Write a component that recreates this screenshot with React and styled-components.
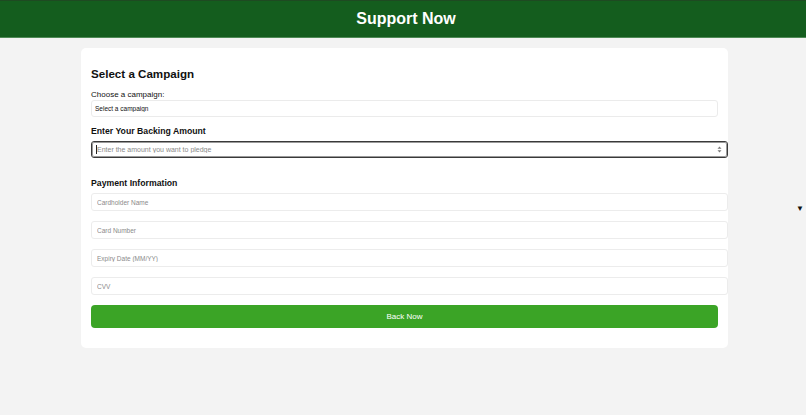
import React from "react";
import styled, { createGlobalStyle } from "styled-components";

const Global = createGlobalStyle`
  html, body { margin: 0; padding: 0; }
  body {
    background: #f3f3f3;
    font-family: "Liberation Sans", Arial, sans-serif;
    color: #111;
  }
  * { box-sizing: border-box; }
`;

const Page = styled.div`
  position: relative;
  min-height: 415px;
`;

const Header = styled.header`
  height: 38px;
  background: #145d1e;
  border-top: 1px solid #1e4a22;
  border-bottom: 1px solid #4f8a56;
  display: flex;
  align-items: center;
  justify-content: center;
`;

const Title = styled.h1`
  margin: 0 0 0 6px;
  color: #fff;
  font-size: 16px;
  font-weight: bold;
  line-height: 20px;
`;

const Card = styled.main`
  width: 647px;
  margin: 10px 0 0 81px;
  background: #fff;
  border-radius: 5px;
  padding: 10px 10px 20px;
  display: flex;
  flex-direction: column;
`;

const H2 = styled.h2`
  margin: 9px 0 0;
  font-size: 11.6px;
  line-height: 14px;
  font-weight: bold;
`;

const Label = styled.label`
  margin-top: 9px;
  font-size: 8px;
  line-height: 10px;
`;

const Select = styled.select`
  margin: 0;
  height: 17px;
  width: 100%;
  border: 1px solid #ebebeb;
  border-radius: 3px;
  background: #fff;
  font-family: inherit;
  font-size: 6.5px;
  padding: 0 3px;
  color: #111;
  appearance: none;
  outline: none;
`;

const H3 = styled.h3`
  margin: ${(p) => p.$top}px 0 0;
  font-size: 8.7px;
  line-height: 12px;
  font-weight: bold;
`;

const FieldWrap = styled.div`
  position: relative;
  margin-top: ${(p) => p.$top}px;
  width: calc(100% + 10px);
`;

const Input = styled.input`
  display: block;
  width: 100%;
  height: ${(p) => (p.$focus ? 17 : 18)}px;
  margin: 0;
  padding: 0 5px;
  font-family: inherit;
  font-size: ${(p) => (p.$focus ? 7 : 6.5)}px;
  color: #111;
  background: #fff;
  border: 1px solid ${(p) => (p.$focus ? "#3a3a3a" : "#ececec")};
  border-radius: 3px;
  outline: ${(p) => (p.$focus ? "1px solid #9a9a9a" : "none")};
  outline-offset: -2px;
  &::placeholder { color: #8a8a8a; }
  &::-webkit-inner-spin-button,
  &::-webkit-outer-spin-button { -webkit-appearance: none; margin: 0; }
  -moz-appearance: textfield;
`;

const Caret = styled.span`
  position: absolute;
  left: 5px;
  top: 4px;
  width: 1px;
  height: 9px;
  background: #222;
`;

const Spinner = styled.svg`
  position: absolute;
  right: 6px;
  top: 5px;
`;

const Button = styled.button`
  margin-top: 10px;
  height: 23px;
  width: 100%;
  border: none;
  border-radius: 4px;
  background: #3ba426;
  color: #fff;
  font-family: inherit;
  font-size: 8px;
`;

const Marker = styled.span`
  position: absolute;
  right: 2px;
  top: 204px;
  font-size: 8px;
  line-height: 10px;
  color: #111;
`;

export default function App() {
  return (
    <Page>
      <Global />
      <Header>
        <Title>Support Now</Title>
      </Header>
      <Card>
        <H2>Select a Campaign</H2>
        <Label htmlFor="campaign">Choose a campaign:</Label>
        <Select id="campaign" defaultValue="">
          <option value="">Select a campaign</option>
        </Select>
        <H3 $top={8}>Enter Your Backing Amount</H3>
        <FieldWrap $top={4}>
          <Input $focus type="number" placeholder="Enter the amount you want to pledge" />
          <Caret />
          <Spinner width="5" height="7" viewBox="0 0 5 7">
            <path d="M2.5 0.5 L4.5 2.8 L0.5 2.8 Z" fill="#777" />
            <path d="M2.5 6.5 L4.5 4.2 L0.5 4.2 Z" fill="#777" />
          </Spinner>
        </FieldWrap>
        <H3 $top={19}>Payment Information</H3>
        <FieldWrap $top={4}>
          <Input type="text" placeholder="Cardholder Name" />
        </FieldWrap>
        <FieldWrap $top={10}>
          <Input type="text" placeholder="Card Number" />
        </FieldWrap>
        <FieldWrap $top={10}>
          <Input type="text" placeholder="Expiry Date (MM/YY)" />
        </FieldWrap>
        <FieldWrap $top={10}>
          <Input type="text" placeholder="CVV" />
        </FieldWrap>
        <Button type="button">Back Now</Button>
      </Card>
      <Marker>▼</Marker>
    </Page>
  );
}
